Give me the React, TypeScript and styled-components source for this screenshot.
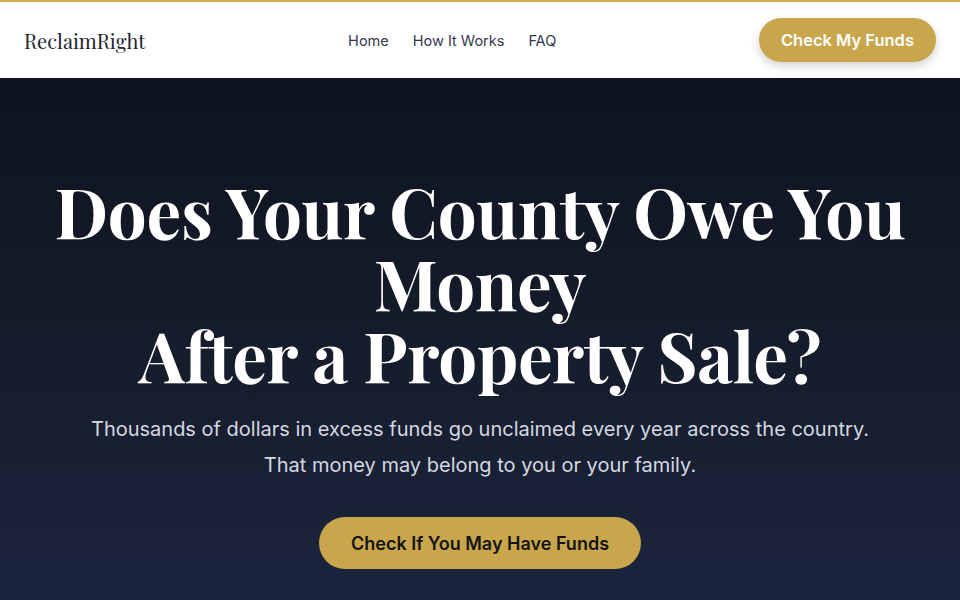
import styled, { createGlobalStyle } from "styled-components";

const GlobalStyle = createGlobalStyle`
    * { box-sizing: border-box; }
    html, body { margin: 0; padding: 0; }
    body {
        font-family: Inter, "Liberation Sans", sans-serif;
        background: #141a2a;
    }
`;

const navLinks = ["Home", "How It Works", "FAQ"];

const App = () => {
    return (
        <>
            <GlobalStyle />
            <Page>
                <Header>
                    <Logo>ReclaimRight</Logo>
                    <Nav>
                        {navLinks.map((link) => (
                            <NavLink key={link} href="#">{link}</NavLink>
                        ))}
                    </Nav>
                    <HeaderButton>Check My Funds</HeaderButton>
                </Header>
                <Hero>
                    <Title>
                        Does Your County Owe You Money
                        <br />
                        After a Property Sale?
                    </Title>
                    <Subtitle>
                        Thousands of dollars in excess funds go unclaimed every year across the country.
                        <br />
                        That money may belong to you or your family.
                    </Subtitle>
                    <HeroButton>Check If You May Have Funds</HeroButton>
                </Hero>
            </Page>
        </>
    );
};

export default App;

const Page = styled.div`
    width: 100%;
    min-height: 100vh;
    display: flex;
    flex-direction: column;
`;

const Header = styled.header`
    height: 78px;
    background: #ffffff;
    border-top: 2px solid #d4ac4e;
    display: flex;
    justify-content: space-between;
    align-items: center;
    padding: 0 24px;
`;

const Logo = styled.div`
    font-family: "Playfair Display", "Liberation Serif", serif;
    font-size: 20.2px;
    color: #1f2430;
`;

const Nav = styled.nav`
    display: flex;
    gap: 24px;
`;

const NavLink = styled.a`
    font-size: 14.5px;
    color: #33384d;
    text-decoration: none;
`;

const HeaderButton = styled.button`
    height: 44px;
    padding: 0 22px;
    border: none;
    border-radius: 999px;
    background: #c9a64c;
    color: #ffffff;
    font-family: Inter, sans-serif;
    font-size: 16.5px;
    font-weight: 600;
    box-shadow: 0 4px 10px rgba(0, 0, 0, 0.18);
`;

const Hero = styled.section`
    flex: 1;
    display: flex;
    flex-direction: column;
    align-items: center;
    text-align: center;
    padding: 96px 40px 40px;
    background: linear-gradient(180deg, #0e1320 0%, #161d2c 55%, #1c2540 100%);
`;

const Title = styled.h1`
    margin: 0;
    font-family: "Playfair Display", "Liberation Serif", serif;
    font-weight: 700;
    font-size: 69px;
    line-height: 72px;
    color: #ffffff;
    max-width: 880px;
    letter-spacing: -0.3px;
`;

const Subtitle = styled.p`
    margin: 21px 0 0;
    font-size: 20px;
    line-height: 36px;
    color: #d5d8e0;
`;

const HeroButton = styled.button`
    margin-top: 34px;
    height: 52px;
    padding: 0 32px;
    border: none;
    border-radius: 999px;
    background: #c9a64c;
    color: #141414;
    font-family: Inter, sans-serif;
    font-size: 18px;
    font-weight: 600;
`;
